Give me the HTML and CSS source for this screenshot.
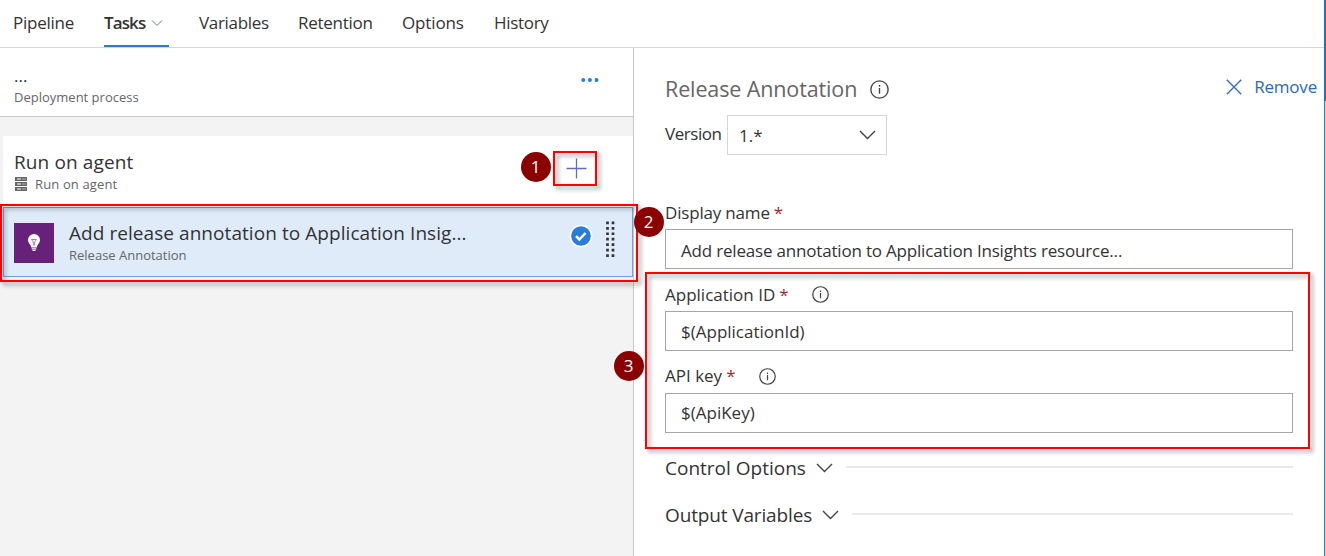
FILE: index.html
```html
<!DOCTYPE html>
<html lang="en">
<head>
<meta charset="utf-8">
<title>Release pipeline tasks</title>
<link rel="stylesheet" href="styles.css">
</head>
<body>
<div class="app">
  <nav class="tabs">
    <a class="tab"><span class="t pipeline">Pipeline</span></a>
    <a class="tab active"><span class="t tasks">Tasks</span><svg class="tab-chevron" width="12" height="8" viewBox="0 0 12 8"><path d="M1 1.500l5 5 5-5"/></svg></a>
    <a class="tab"><span class="t variables">Variables</span></a>
    <a class="tab"><span class="t retention">Retention</span></a>
    <a class="tab"><span class="t options">Options</span></a>
    <a class="tab"><span class="t history">History</span></a>
  </nav>
  <div class="content">
    <section class="process">
      <header class="process-head">
        <div class="stack">
          <div class="process-name"><span>...</span></div>
          <div class="small"><span class="t">Deployment process</span></div>
        </div>
        <svg class="more" width="18" height="6" viewBox="0 0 18 6"><circle cx="2.300" cy="3" r="2"/><circle cx="8.900" cy="3" r="2"/><circle cx="15.500" cy="3" r="2"/></svg>
      </header>
      <div class="agent">
        <div class="stack">
          <div class="big"><span class="t run">Run on agent</span></div>
          <div class="small agent-sub">
            <svg width="13" height="14" viewBox="0 0 13 14"><path fill="#666" d="M1 0h12v4H1zM1 5h12v4H1zM1 10h12v4H1z"/><path fill="#fff" d="M3 1.500h4v1H3zM8.500 1.500h1v1h-1zM10.500 1.500h1v1h-1zM3 6.500h4v1H3zM8.500 6.500h1v1h-1zM10.500 6.500h1v1h-1zM3 11.500h4v1H3zM8.500 11.500h1v1h-1zM10.500 11.500h1v1h-1z"/></svg>
            <span class="t run-sub">Run on agent</span>
          </div>
        </div>
        <svg class="plus" width="21" height="21" viewBox="0 0 21 21"><path d="M.5 10.500h20M10.500 .5v20"/></svg>
      </div>
      <div class="task">
        <svg class="task-icon" width="40" height="40" viewBox="0 0 40 40"><path fill="#68217a" d="M0 0h40v40H0z"/><path fill="#fff" d="M20 11a6 6 0 0 0-6 6c0 2.400 1.400 3.500 2.400 5l.9 2.500h5.400l.9-2.500c1-1.500 2.400-2.600 2.400-5a6 6 0 0 0-6-6z"/><path fill="none" stroke="#a27bad" d="M19.300 22.500v-3.500l-1.800-2.500h5L20.700 19v3.500"/><path fill="#fff" d="M17.700 25.300h4.600v1.100h-4.600zM18.500 27.100h3v1h-3z"/></svg>
        <div class="stack">
          <div class="big"><span class="t task-name">Add release annotation to Application Insig...</span></div>
          <div class="small"><span class="t">Release Annotation</span></div>
        </div>
        <svg class="check" width="24" height="24" viewBox="0 0 24 24"><circle cx="12" cy="12" r="11.300" fill="#fff"/><circle cx="12" cy="12" r="9.800" fill="#2b7cd9"/><path d="M7 12.200l3.300 3.300 6.300-6.500" fill="none" stroke="#fff" stroke-width="2.500"/></svg>
        <svg class="grip" width="9" height="37" viewBox="0 0 9 37"><path d="M1.500 .5v36M7 .5v36" stroke="#333" stroke-width="2.700" stroke-dasharray="2.700 2.750"/></svg>
      </div>
    </section>
    <section class="details">
      <header class="details-head">
        <h1><span class="t title">Release Annotation</span></h1>
        <svg class="info large" viewBox="0 0 18 18"><circle cx="9" cy="9" r="8.200"/><path d="M9 7.500v5.500M9 4.800v1.500"/></svg>
        <button class="remove"><svg width="16" height="16" viewBox="0 0 16 16"><path d="M.8.8l14.400 14.400M15.200.8L.8 15.200"/></svg><span class="t remove-text">Remove</span></button>
      </header>
      <div class="version">
        <span class="t version-text">Version</span>
        <div class="select"><span>1.*</span><svg class="chevron" width="17" height="10" viewBox="0 0 17 10"><path d="M1 1l7.500 7.500L16 1"/></svg></div>
      </div>
      <div class="label first"><span class="t display-name">Display name</span><b>*</b></div>
      <div class="input display"><span class="t display-value">Add release annotation to Application Insights resource...</span></div>
      <div class="label"><span class="t">Application ID</span><b>*</b><svg class="info" viewBox="0 0 18 18"><circle cx="9" cy="9" r="8.200"/><path d="M9 7.500v5.500M9 4.800v1.500"/></svg></div>
      <div class="input"><span class="t">$(ApplicationId)</span></div>
      <div class="label key"><span class="t">API key</span><b>*</b><svg class="info" viewBox="0 0 18 18"><circle cx="9" cy="9" r="8.200"/><path d="M9 7.500v5.500M9 4.800v1.500"/></svg></div>
      <div class="input key"><span class="t">$(ApiKey)</span></div>
      <div class="group control"><span class="t">Control Options</span><svg class="chevron" width="17" height="10" viewBox="0 0 17 10"><path d="M1 1l7.500 7.500L16 1"/></svg><i></i></div>
      <div class="group"><span class="t output">Output Variables</span><svg class="chevron" width="17" height="10" viewBox="0 0 17 10"><path d="M1 1l7.500 7.500L16 1"/></svg><i></i></div>
    </section>
  </div>
  <div class="edge"></div>
  <div class="callout box-one"></div><div class="callout box-two"></div><div class="callout box-three"></div>
  <div class="badge one">1</div><div class="badge two">2</div><div class="badge three">3</div>
</div>
</body>
</html>
```

FILE: styles.css
```css
* { box-sizing: border-box; }
body { margin: 0; font-family: "Open Sans", "Noto Sans", sans-serif; color: #333; font-size: 17px; background: #fff; }
svg { display: block; flex: none; }
.t { white-space: nowrap; }
.app { position: relative; width: 1326px; height: 556px; overflow: hidden; display: flex; flex-direction: column; }

.tabs { display: grid; grid-template-columns: 91px 95px 99px 104px 92px 80px; height: 48px; flex: none; border-bottom: 1px solid #d6d6d6; padding-left: 13px; }
.tab { display: flex; align-items: center; height: 47px; padding-bottom: 3px; }
.tab.active { width: 65px; font-weight: 600; border-bottom: 2px solid #2b7cd9; padding-bottom: 1px; }
.tab-chevron { margin: 2px 6px 0 auto; fill: none; stroke: #777; }
.pipeline { letter-spacing: -.25px; }
.tasks { letter-spacing: -.9px; }
.variables { letter-spacing: -.32px; }
.retention { letter-spacing: -.28px; }
.options { letter-spacing: -.15px; }
.history { letter-spacing: -.3px; }

.content { display: flex; flex: 1; }
.process { width: 634px; flex: none; background: #f3f3f3; border-right: 1px solid #c8c8c8; }
.process-head { display: flex; height: 69px; background: #fff; border-bottom: 1px solid #c8c8c8; padding: 18px 34px 0 14px; justify-content: space-between; }
.process-head .small { padding-top: 1px; }
.process-name { height: 20px; line-height: 20px; }
.small { font-size: 13px; line-height: 20px; color: #666; }
.more { margin-top: 11px; fill: #2b7cd9; }
.big { font-size: 19px; line-height: 26px; }
.run { letter-spacing: .12px; }
.run-sub { letter-spacing: .14px; }
.task-name { letter-spacing: .06px; }
.agent { display: flex; justify-content: space-between; height: 71px; margin: 19px 0 0 3px; padding: 13px 46px 0 11px; background: #fff; }
.agent-sub { display: flex; align-items: center; gap: 8px; height: 18px; }
.plus { margin-top: 9px; fill: none; stroke: #5b6fc0; stroke-width: 1.300; }
.task { display: flex; height: 70px; margin-left: 3px; padding: 0 17px 0 10px; background: #dfebf9; border: 1px solid #6e9ff0; }
.task-icon { margin-top: 15px; }
.task .stack { margin: 12px 0 0 15px; }
.task .small { line-height: 18px; }
.check { margin: 16px 13px 0 auto; }
.grip { margin-top: 13px; }

.details { flex: 1; padding: 23px 33px 0 31px; }
.details-head { display: flex; height: 36px; align-items: center; margin-right: -24px; }
h1 { margin: 0; font-size: 21.5px; font-weight: 400; color: #666; line-height: 30px; }
.title { letter-spacing: -.12px; }
.info { width: 17px; height: 17px; margin: 1px 0 0 25px; fill: none; stroke: #444; stroke-width: 1.300; }
.info.large { width: 19px; height: 19px; margin-left: 13px; }
.remove { display: flex; align-items: center; gap: 12px; margin: 0 0 5px auto; padding: 0; border: 0; background: none; font: inherit; color: #2b68c4; }
.remove svg { stroke: #2b68c4; stroke-width: 1.300; }
.remove-text { letter-spacing: -.2px; }
.version { display: flex; height: 47px; margin-top: 8px; }
.version > span { line-height: 38px; width: 62px; }
.version-text { letter-spacing: -.45px; }
.select { width: 160px; height: 40px; display: flex; align-items: center; justify-content: space-between; border: 1px solid #d6d6d6; padding: 0 10px 0 11px; }
.chevron { fill: none; stroke: #444; stroke-width: 1.400; }
.label { display: flex; align-items: center; height: 42px; padding-top: 8px; }
.label.key { padding-top: 7px; }
.label.first { margin-top: 39px; height: 28px; padding: 0 0 6px; }
.display-name { letter-spacing: -.18px; }
.display-value { letter-spacing: -.19px; }
.label b { font-weight: 400; color: #a4262c; margin-left: 4px; width: 8px; }
.input { display: flex; align-items: center; height: 40px; border: 1px solid #a6a6a6; padding: 0 15px; }
.input.display { padding-top: 2px; }
.input.key { padding-bottom: 2px; }
.group { display: flex; align-items: center; height: 47px; font-size: 19px; }
.group.control { margin-top: 11px; }
.output { letter-spacing: -.14px; }
.group .chevron { margin: 0 13px 0 10px; }
.group i { flex: 1; height: 2px; margin-bottom: 2px; background: #eaeaea; }

.edge { position: absolute; right: 0; top: 0; width: 2px; height: 556px; background: linear-gradient(#1478c4 101px, transparent 101px), linear-gradient(90deg, #1883d7 50%, #c7dcf0 50%); }
.callout { position: absolute; border: 2px solid #f00; filter: drop-shadow(3px 3px 2px rgba(0, 0, 0, .4)); }
.box-one { left: 553px; top: 151px; width: 44px; height: 35px; }
.box-two { left: 0; top: 204px; width: 638px; height: 78px; }
.box-three { left: 645px; top: 272px; width: 665px; height: 177px; }
.badge { position: absolute; width: 30px; height: 30px; border-radius: 50%; background: #8b0000; color: #fff; font: 17px/29px "Open Sans", sans-serif; text-align: center; }
.one { left: 520.500px; top: 151.500px; }
.two { left: 633.500px; top: 206.500px; }
.three { left: 613.500px; top: 350.500px; }
```
